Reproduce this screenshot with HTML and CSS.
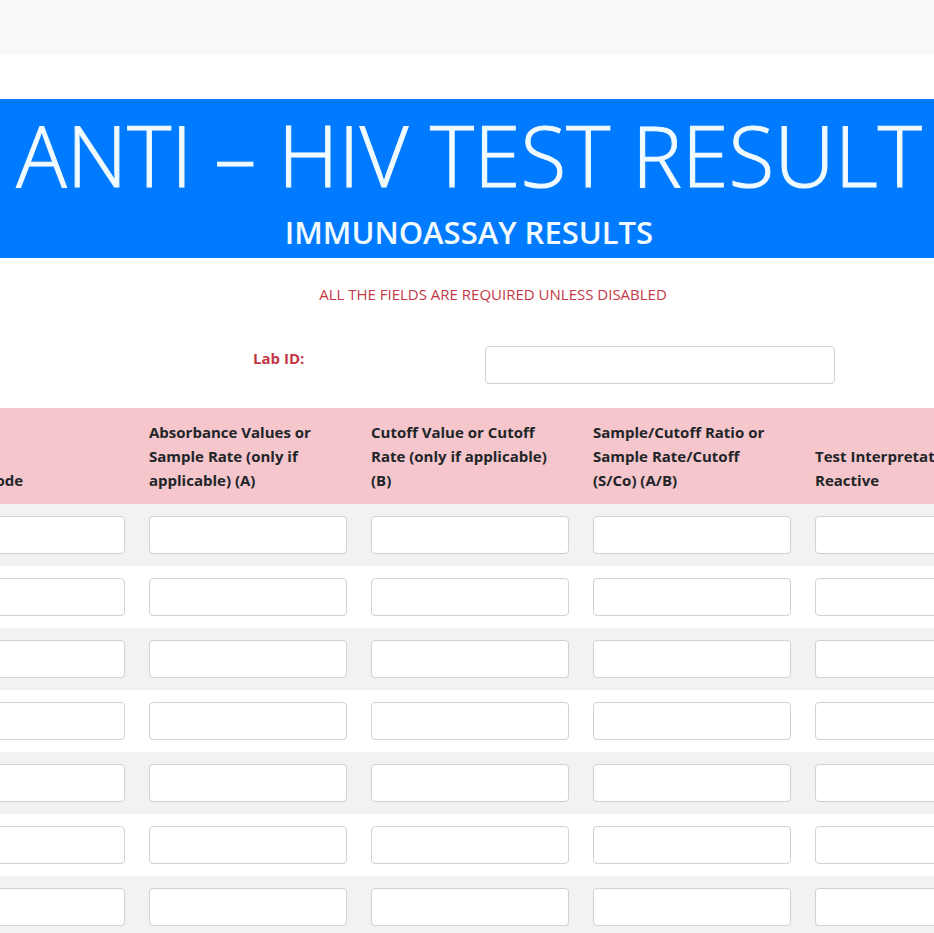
FILE: index.html
```html
<!DOCTYPE html>
<html lang="en">
<head>
<meta charset="utf-8">
<title>Anti – HIV Test Result</title>
<link rel="stylesheet" href="styles.css">
</head>
<body>
<nav class="navbar" aria-label="Main"></nav>
<main>
<header class="banner">
<h1 class="banner-title">ANTI – HIV TEST RESULT</h1>
<h2 class="banner-subtitle">IMMUNOASSAY RESULTS</h2>
</header>
<form>
<p class="notice">ALL THE FIELDS ARE REQUIRED UNLESS DISABLED</p>
<div class="lab">
<label class="lab-label" for="lab-id">Lab ID:</label>
<input class="field" id="lab-id" type="text">
</div>
<div class="table-view">
<table class="results">
<thead>
<tr>
<th scope="col"><span id="c1">Sample Code</span></th>
<th scope="col"><span id="c2">Absorbance Values or<br>Sample Rate (only if<br>applicable) (A)</span></th>
<th scope="col"><span id="c3">Cutoff Value or Cutoff<br>Rate (only if applicable)<br>(B)</span></th>
<th scope="col"><span id="c4">Sample/Cutoff Ratio or<br>Sample Rate/Cutoff<br>(S/Co) (A/B)</span></th>
<th scope="col"><span id="c5">Test Interpretation<br>Reactive</span></th>
</tr>
</thead>
<tbody>
<tr><td><input class="field" aria-labelledby="c1"></td><td><input class="field" aria-labelledby="c2"></td><td><input class="field" aria-labelledby="c3"></td><td><input class="field" aria-labelledby="c4"></td><td><input class="field" aria-labelledby="c5"></td></tr>
<tr><td><input class="field" aria-labelledby="c1"></td><td><input class="field" aria-labelledby="c2"></td><td><input class="field" aria-labelledby="c3"></td><td><input class="field" aria-labelledby="c4"></td><td><input class="field" aria-labelledby="c5"></td></tr>
<tr><td><input class="field" aria-labelledby="c1"></td><td><input class="field" aria-labelledby="c2"></td><td><input class="field" aria-labelledby="c3"></td><td><input class="field" aria-labelledby="c4"></td><td><input class="field" aria-labelledby="c5"></td></tr>
<tr><td><input class="field" aria-labelledby="c1"></td><td><input class="field" aria-labelledby="c2"></td><td><input class="field" aria-labelledby="c3"></td><td><input class="field" aria-labelledby="c4"></td><td><input class="field" aria-labelledby="c5"></td></tr>
<tr><td><input class="field" aria-labelledby="c1"></td><td><input class="field" aria-labelledby="c2"></td><td><input class="field" aria-labelledby="c3"></td><td><input class="field" aria-labelledby="c4"></td><td><input class="field" aria-labelledby="c5"></td></tr>
<tr><td><input class="field" aria-labelledby="c1"></td><td><input class="field" aria-labelledby="c2"></td><td><input class="field" aria-labelledby="c3"></td><td><input class="field" aria-labelledby="c4"></td><td><input class="field" aria-labelledby="c5"></td></tr>
<tr><td><input class="field" aria-labelledby="c1"></td><td><input class="field" aria-labelledby="c2"></td><td><input class="field" aria-labelledby="c3"></td><td><input class="field" aria-labelledby="c4"></td><td><input class="field" aria-labelledby="c5"></td></tr>
</tbody>
</table>
</div>
</form>
</main>
</body>
</html>
```
FILE: styles.css
```css
* { box-sizing: border-box; }
html { overflow: hidden; }
body {
  margin: 0;
  background: #fff;
  color: #212529;
  font: 400 16px/24px "Segoe UI", "Open Sans", sans-serif;
}
.navbar { padding: 28px 0 27px; background: #f8f9fa; }
main { padding-top: 44px; overflow: hidden; }
.banner {
  padding: 4px 0 8px;
  background: #007bff;
  color: #f0faff;
  text-align: center;
  white-space: nowrap;
}
.banner-title {
  margin: 0 0 8px;
  padding-left: 4px;
  font-size: 84px;
  font-weight: 300;
  line-height: 104px;
  -webkit-text-stroke: 1px currentColor;
}
.banner-subtitle { margin: 0; padding-left: 4px; font-size: 31px; font-weight: 600; line-height: 35px; }
.notice {
  margin: 24px 0 0 52px;
  color: #c43746;
  font-size: 15px;
  font-weight: 400;
  text-align: center;
}
.lab {
  display: grid;
  grid-template-columns: 232px minmax(0, 350px);
  padding: 40px 99px 24px 253px;
}
.lab-label { color: #c43746; font-size: 15px; font-weight: 700; }
.field {
  display: block;
  width: 100%;
  height: 38px;
  padding: 6px 12px;
  border: 1px solid #cfd1d4;
  border-radius: 4px;
  background: #fff;
  font: inherit;
}
.table-view { overflow: hidden; }
.results {
  width: 1110px;
  margin-left: -85px;
  table-layout: fixed;
  border-collapse: collapse;
}
.results th {
  padding: 12px;
  background: #f5c6cb;
  font-size: 15px;
  font-weight: 700;
  text-align: left;
  vertical-align: bottom;
  white-space: nowrap;
}
.results td { padding: 12px; }
.results tbody tr:nth-child(odd) { background: #f2f2f2; }
```
